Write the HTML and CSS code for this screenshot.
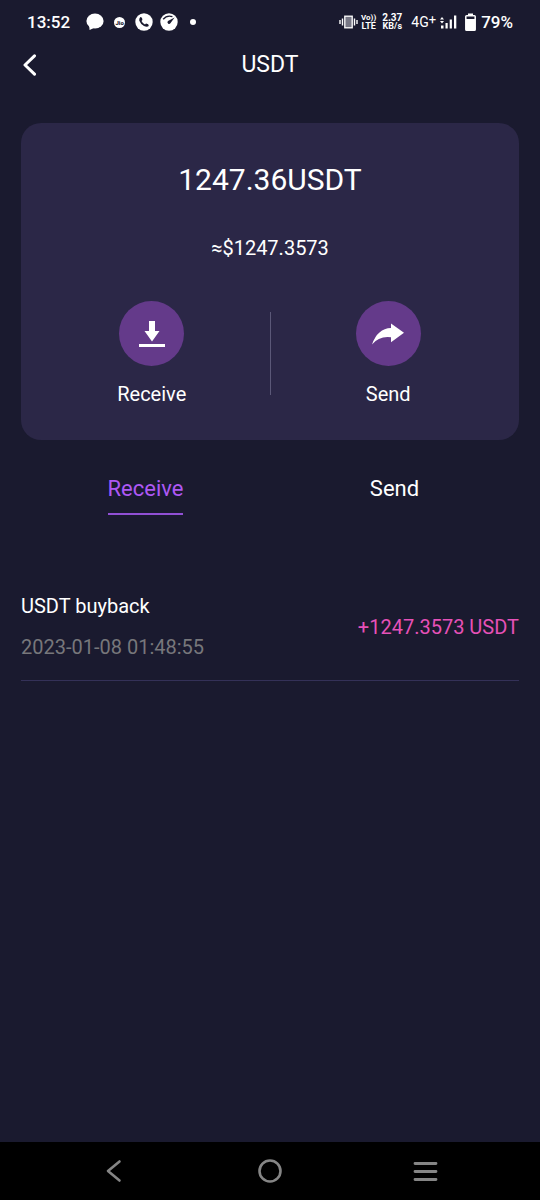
FILE: index.html
```html
<!DOCTYPE html>
<html lang="en">
<head>
<meta charset="utf-8">
<meta name="viewport" content="width=device-width, initial-scale=1">
<title>USDT</title>
<link rel="stylesheet" href="styles.css">
</head>
<body class="screen">
<div class="status">
  <div class="status-left">
    <span class="clock">13:52</span>
    <svg class="chat" width="18" height="18" viewBox="0 0 18 18" fill="#fff" aria-hidden="true"><ellipse cx="9" cy="8" rx="8.6" ry="7.6"/><path d="M3 12L3.6 17L10 14Z"/></svg>
    <span class="jio">Jio</span>
    <svg class="phone" width="18" height="18" viewBox="0 0 18 18" aria-hidden="true"><circle cx="9" cy="9" r="8.7" fill="#fff"/><path d="M5.3 4L7 4.8L7.4 7L6.5 8Q7.7 10.5 10 11.5L11 10.6L13.2 11.2L13.8 13Q12 14.6 9 13Q5.5 11 4.3 7.8Q3.9 5.5 5.3 4Z" fill="#1a1a2f"/></svg>
    <svg class="gauge" width="18" height="18" viewBox="0 0 18 18" aria-hidden="true"><circle cx="9" cy="9" r="8.7" fill="#fff"/><path d="M3.2 6.3Q7 1.8 12.4 3.7" fill="none" stroke="#1a1a2f" stroke-width="1.4"/><path d="M14.6 4.6L10.4 10.2A1.6 1.6 0 1 1 8 8.1Z" fill="#1a1a2f"/></svg>
    <span class="dot"></span>
  </div>
  <div class="status-right">
    <svg width="19" height="14" viewBox="0 0 19 14" fill="none" stroke="#fff" aria-hidden="true"><rect x="5.8" y="1.2" width="7.4" height="11.6" fill="#777785" stroke-width="1.3"/><path d="M3.5 3.5V10.5M1 5V9M15.5 3.5V10.5M18 5V9" stroke-width="1.4"/></svg>
    <span class="stack volte"><span class="vo">Vo))</span><span>LTE</span></span>
    <span class="stack speed"><span class="rate">2.37</span><span>KB/s</span></span>
    <span class="network">4G<span class="plus">+</span></span>
    <svg class="signal" width="17" height="16" viewBox="0 0 17 16" fill="#fff" aria-hidden="true"><path d="M0 5.5L2 3L4 5.5ZM0 7H4L2 9.5ZM1 11.5H3.5V14.5H1ZM5.5 9H7.7V14.5H5.5ZM9.7 5.5H11.9V14.5H9.7ZM14 1.5H16.3V14.5H14Z"/></svg>
    <svg class="battery" width="11" height="18" viewBox="0 0 11 18" aria-hidden="true"><path d="M3 0.5H8V2.5H3Z" fill="#fff"/><rect x="0.8" y="2.8" width="9.4" height="14.4" rx="0.8" fill="none" stroke="#fff" stroke-width="1.5"/><path d="M1 6H10V17H1Z" fill="#fff"/></svg>
    <span class="percent">79%</span>
  </div>
</div>
<header class="header">
  <button class="back" aria-label="Back"><svg width="14" height="22" viewBox="0 0 14 22" fill="none" stroke="#fff" stroke-width="3" stroke-linecap="round" stroke-linejoin="round" aria-hidden="true"><path d="M11.5 1.8L2 11L11.5 20.2"/></svg></button>
  <h1 class="title">USDT</h1>
</header>
<main class="content">
  <section class="card">
    <p class="balance">1247.36USDT</p>
    <p class="value">≈$1247.3573</p>
    <div class="actions">
      <button class="action">
        <span class="action-icon"><svg width="26" height="26" viewBox="0 0 26 26" fill="#fff" aria-hidden="true"><path d="M10 0H16V10H20.5L13 20.5L5.5 10H10ZM0 23H26V26H0Z"/></svg></span>
        <span>Receive</span>
      </button>
      <span class="divider"></span>
      <button class="action">
        <span class="action-icon"><svg width="32" height="22" viewBox="0 0 32 22" fill="#fff" aria-hidden="true"><path d="M19 0.5L32 9.8L19 19.3V14.2Q7 12.7 0 21.5Q5.5 5.5 19 5Z"/></svg></span>
        <span>Send</span>
      </button>
    </div>
  </section>
  <nav class="tabs">
    <button class="tab tab-active">Receive</button>
    <button class="tab">Send</button>
  </nav>
  <ul class="history">
    <li class="entry">
      <div class="entry-info">
        <span>USDT buyback</span>
        <time class="date" datetime="2023-01-08T01:48:55">2023-01-08 01:48:55</time>
      </div>
      <span class="amount">+1247.3573 USDT</span>
    </li>
  </ul>
</main>
<footer class="navbar">
  <button class="nav-button" aria-label="Back"><svg width="24" height="26" viewBox="0 0 24 26" fill="none" stroke="#858585" stroke-width="2.6" stroke-linecap="round" stroke-linejoin="round" aria-hidden="true"><path d="M17.5 3.5L6 13L17.5 22.5"/></svg></button>
  <button class="nav-button" aria-label="Home"><svg width="26" height="26" viewBox="0 0 26 26" fill="none" stroke="#858585" stroke-width="2.6" aria-hidden="true"><circle cx="13" cy="13" r="10.5"/></svg></button>
  <button class="nav-button" aria-label="Recent apps"><svg width="26" height="26" viewBox="0 0 26 26" stroke="#858585" stroke-width="2.8" stroke-linecap="round" aria-hidden="true"><path d="M2 5.5H23M2 13.5H23M2 21.5H23"/></svg></button>
</footer>
</body>
</html>
```
FILE: styles.css
```css
* { box-sizing: border-box; }

.screen {
  margin: 0;
  min-height: 100vh;
  display: flex;
  flex-direction: column;
  background: #1a1a2f;
  color: #fff;
  font-family: Roboto, "Liberation Sans", sans-serif;
  font-size: 20px;
  line-height: 24px;
}

button {
  padding: 0;
  border: 0;
  background: none;
  color: inherit;
  font: inherit;
  cursor: pointer;
}

svg { display: block; flex: none; }

.status {
  height: 44px;
  padding: 0 27px;
  display: flex;
  align-items: center;
  justify-content: space-between;
  font-size: 17px;
  font-weight: 500;
}

.status-left, .status-right { display: flex; align-items: center; }
.chat { margin-left: 16px; }
.jio {
  width: 11px;
  height: 11px;
  margin: 0 10px;
  border-radius: 50%;
  background: #fff;
  color: #1a1a2f;
  font-size: 6px;
  font-weight: 900;
  line-height: 11px;
  text-align: center;
}
.gauge { margin: 0 12px 0 7px; }
.dot { width: 6px; height: 6px; border-radius: 50%; background: #fff; }

.stack {
  display: flex;
  flex-direction: column;
  font-size: 9px;
  font-weight: 700;
  line-height: 9px;
  text-align: center;
}
.vo { font-size: 8px; }
.rate { font-size: 10px; }
.volte { margin-left: 3px; }
.speed { margin: 0 9px 0 6px; }
.network { display: flex; font-size: 14px; font-weight: 400; }
.plus { font-size: 13px; line-height: 20px; }
.signal { margin-left: 4px; }
.battery { margin: 0 5px 0 8px; }

.header {
  height: 42px;
  padding: 0 23px;
  display: grid;
  grid-template-columns: 1fr auto 1fr;
  align-items: center;
}
.back { justify-self: start; }
.title { margin: 0; font-size: 23px; font-weight: 400; }

.content { flex: 1; padding: 37px 21px; }

.card {
  padding: 39px 13px 34px;
  border-radius: 20px;
  background: #2b2747;
  text-align: center;
}
.balance { margin: 0; font-size: 30px; line-height: 36px; }
.value { margin: 38px 0 41px; }
.actions { display: flex; align-items: center; }
.action {
  flex: 1;
  display: flex;
  flex-direction: column;
  align-items: center;
  gap: 16px;
}
.action-icon {
  width: 65px;
  height: 65px;
  border-radius: 50%;
  display: grid;
  place-items: center;
  background: #643a8a;
}
.divider { width: 1px; height: 83px; background: #5b5878; }

.tabs {
  margin-top: 37px;
  display: grid;
  grid-template-columns: 1fr 1fr;
  justify-items: center;
}
.tab {
  padding-bottom: 12px;
  border-bottom: 2px solid transparent;
  font-size: 22px;
}
.tab-active { color: #ae58f5; border-color: #9150d5; }

.history { margin: 79px 0 0; padding: 0; list-style: none; }
.entry {
  padding-bottom: 21px;
  display: flex;
  align-items: center;
  justify-content: space-between;
  border-bottom: 1px solid #343158;
}
.entry-info { display: flex; flex-direction: column; gap: 17px; }
.date { color: #77777b; }
.amount { color: #e651b8; }

.navbar {
  height: 58px;
  padding: 0 36px;
  display: grid;
  grid-template-columns: repeat(3, 1fr);
  background: #000;
}
.nav-button { display: grid; place-items: center; }
```
